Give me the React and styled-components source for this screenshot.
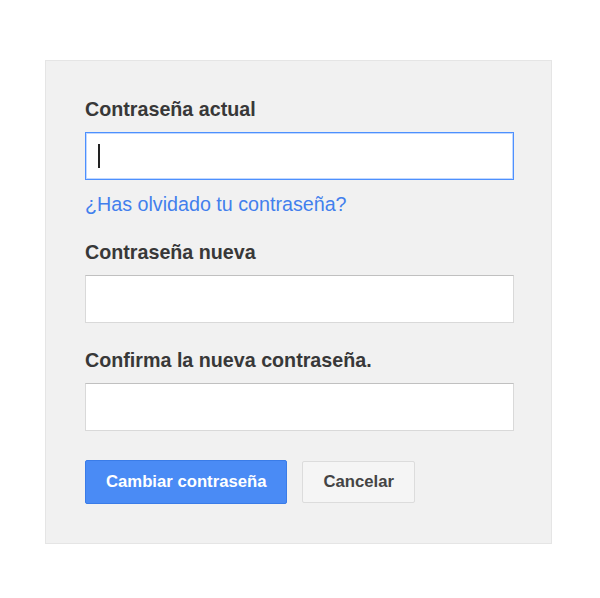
import React from "react";
import styled, { createGlobalStyle } from "styled-components";

const Global = createGlobalStyle`
  html, body { margin: 0; padding: 0; background: #ffffff; }
  body { font-family: "Liberation Sans", Arial, sans-serif; }
`;

const Page = styled.div`
  padding: 60px 0 0 45px;
`;

const Panel = styled.form`
  box-sizing: border-box;
  width: 507px;
  background: #f1f1f1;
  border: 1px solid #e5e5e5;
  padding: 37px 37px 39px 39px;
  display: flex;
  flex-direction: column;
`;

const Field = styled.div`
  display: flex;
  flex-direction: column;
  gap: 12px;
  margin-top: ${(p) => p.$top || 0}px;
`;

const Label = styled.label`
  font-size: 19.7px;
  line-height: 22px;
  font-weight: bold;
  color: #383838;
`;

const Input = styled.div`
  box-sizing: border-box;
  height: 48px;
  width: 429px;
  background: #ffffff;
  border: 1px solid ${(p) => (p.$focused ? "#4d90fe" : "#d9d9d9")};
  border-top-color: ${(p) => (p.$focused ? "#4d90fe" : "#c0c0c0")};
  box-shadow: ${(p) =>
    p.$focused ? "inset 0 0 0 1px rgba(77,144,254,0.35)" : "none"};
  display: flex;
  align-items: center;
  padding-left: 12px;
`;

const Caret = styled.span`
  display: block;
  width: 2px;
  height: 24px;
  background: #222222;
`;

const Link = styled.a`
  margin-top: 13px;
  font-size: 19.7px;
  line-height: 22px;
  color: #427fed;
  text-decoration: none;
  cursor: pointer;
`;

const Actions = styled.div`
  display: flex;
  align-items: center;
  gap: 15px;
  margin-top: 29px;
`;

const Button = styled.button`
  box-sizing: border-box;
  height: ${(p) => (p.$primary ? 44 : 42)}px;
  padding: 0 ${(p) => (p.$primary ? 20 : 20)}px;
  border-radius: 2px;
  font-family: "Liberation Sans", Arial, sans-serif;
  font-size: 16.7px;
  font-weight: bold;
  cursor: pointer;
  background: ${(p) => (p.$primary ? "#4a8bf5" : "#f5f5f5")};
  border: 1px solid ${(p) => (p.$primary ? "#3a7ce8" : "#dcdcdc")};
  color: ${(p) => (p.$primary ? "#ffffff" : "#444444")};
`;

export default function App() {
  return (
    <>
      <Global />
      <Page>
        <Panel onSubmit={(e) => e.preventDefault()}>
          <Field>
            <Label>Contraseña actual</Label>
            <Input $focused>
              <Caret />
            </Input>
          </Field>
          <Link>¿Has olvidado tu contraseña?</Link>
          <Field $top={26}>
            <Label>Contraseña nueva</Label>
            <Input />
          </Field>
          <Field $top={26}>
            <Label>Confirma la nueva contraseña.</Label>
            <Input />
          </Field>
          <Actions>
            <Button $primary type="button">Cambiar contraseña</Button>
            <Button type="button">Cancelar</Button>
          </Actions>
        </Panel>
      </Page>
    </>
  );
}
